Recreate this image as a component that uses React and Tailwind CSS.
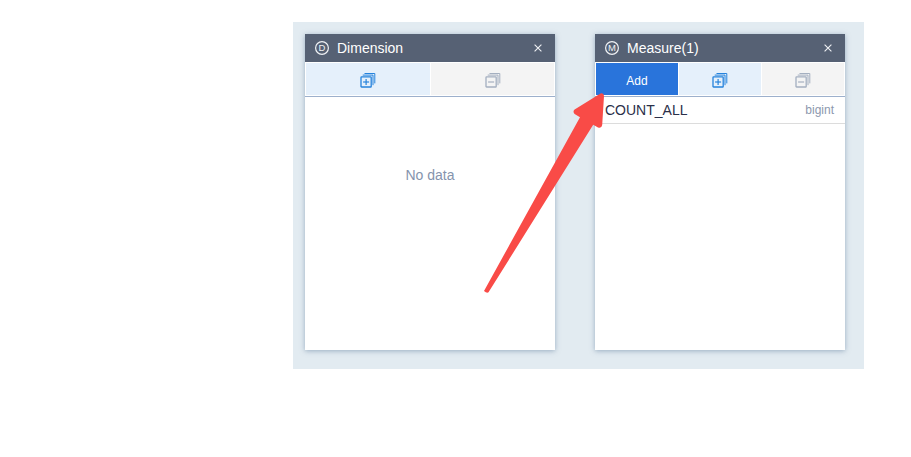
import React from "react";

function StackIcon({ plus, className }) {
  return (
    <svg width="16" height="16" viewBox="0 0 16 16" fill="none" stroke="currentColor" className={className}>
      <path d="M4.5 1.5H14.8V11.4" strokeWidth="1" />
      <path d="M2.7 3.1H13V13.2" strokeWidth="1" />
      <rect x="1" y="4.9" width="10.2" height="10.1" rx="0.6" strokeWidth="1.3" />
      <path d="M3.1 10H9.1" strokeWidth="1.2" />
      {plus && <path d="M6.1 7V13" strokeWidth="1.2" />}
    </svg>
  );
}

function PanelHeader({ letter, title }) {
  return (
    <div className="flex h-7 items-center bg-[#566174] pl-[10px] pr-[13px] text-[#f0f2f5]">
      <svg width="14" height="14" viewBox="0 0 14 14" className="shrink-0">
        <circle cx="7" cy="7" r="6.4" fill="none" stroke="currentColor" strokeWidth="1.2" />
        <text x="7" y="10.3" textAnchor="middle" fontSize="9.5" fill="currentColor">{letter}</text>
      </svg>
      <span className="ml-2 flex-1 text-sm leading-7 text-white">{title}</span>
      <svg width="8" height="8" viewBox="0 0 8 8" stroke="currentColor" strokeWidth="1.1">
        <path d="M0.6 0.6L7.4 7.4M7.4 0.6L0.6 7.4" />
      </svg>
    </div>
  );
}

function Panel({ letter, title, toolbar, children }) {
  return (
    <section className="h-[316px] w-[250px] bg-white shadow-[0_1px_5px_rgba(82,112,148,0.5)]">
      <PanelHeader letter={letter} title={title} />
      <div className="flex h-[35px] gap-px border-b border-[#9db0cc] p-px">{toolbar}</div>
      {children}
    </section>
  );
}

function ToolButton({ plus, className }) {
  return (
    <button
      className={
        "flex items-center justify-center pt-px " +
        (plus ? "bg-[#e5f0fb] text-[#2683dc] " : "bg-[#f4f4f4] text-[#a4afc0] ") +
        className
      }
    >
      <StackIcon plus={plus} />
    </button>
  );
}

export default function App() {
  return (
    <main className="relative h-[457px] w-[911px] overflow-hidden bg-white pl-[293px] pt-[22px] font-['Liberation_Sans',Arial,sans-serif]">
      <div className="flex h-[347px] w-[571px] gap-10 bg-[#e2ebf1] px-3 pt-3">
        <Panel
          letter="D"
          title="Dimension"
          toolbar={
            <>
              <ToolButton plus className="w-[124px]" />
              <ToolButton className="w-[123px]" />
            </>
          }
        >
          <div className="pt-[68px] text-center text-sm leading-5 text-[#8593ad]">No data</div>
        </Panel>
        <Panel
          letter="M"
          title="Measure(1)"
          toolbar={
            <>
              <button className="w-[82px] bg-[#2974db] pt-[3px] text-xs text-white">Add</button>
              <ToolButton plus className="w-[82px]" />
              <ToolButton className="w-[82px]" />
            </>
          }
        >
          <div className="flex h-[27px] items-center justify-between border-b border-[#dcdcdc] pl-[10px] pr-[11px]">
            <span className="text-sm leading-[26px] text-[#2b3049]">COUNT_ALL</span>
            <span className="text-xs leading-[26px] text-[#8c98ae]">bigint</span>
          </div>
        </Panel>
      </div>
      <svg className="absolute left-[480px] top-[90px]" width="130" height="208" viewBox="480 90 130 208">
        <path
          d="M484 291L580 117.2L574.6 114Q572.4 111.8 574.6 109.6L600.5 93.6Q603.8 92.6 604 96L602.2 125Q601.5 128.8 598 127.5L593.2 124.8L488.5 292.3Q486.8 293.4 484 291Z"
          fill="#f94b47"
        />
      </svg>
    </main>
  );
}
